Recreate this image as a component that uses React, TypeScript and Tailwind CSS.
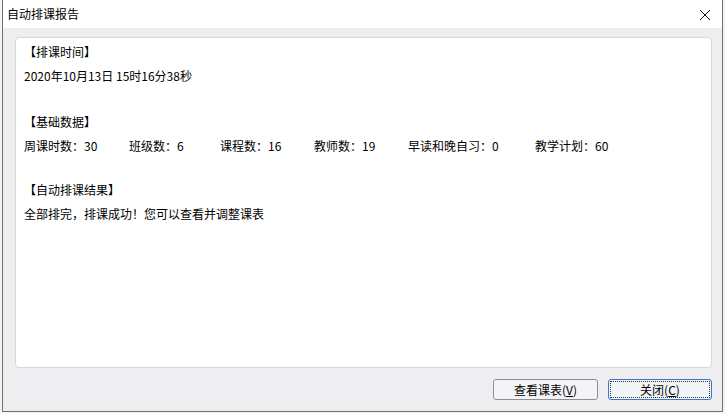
import React from 'react';

const FONT = { fontFamily: '"Microsoft YaHei", "Noto Sans CJK SC", sans-serif' };

const STATS = [
    { label: '周课时数', value: '30', w: 'w-[105px]' },
    { label: '班级数', value: '6', w: 'w-[91px]' },
    { label: '课程数', value: '16', w: 'w-[94px]' },
    { label: '教师数', value: '19', w: 'w-[94px]' },
    { label: '早读和晚自习', value: '0', w: 'w-[127px]' },
    { label: '教学计划', value: '60', w: 'w-auto' },
];

export default function App() {
    return (
        <div className="w-[725px] h-[413px] bg-[#f3f3f3] flex text-[12px] text-black" style={FONT}>
            <div className="ml-[2px] w-[721px] h-[412px] border-l border-r border-b border-[#707070] bg-[#eeedf0] flex flex-col">
                {/* Title bar */}
                <div className="h-[28px] bg-white flex items-center justify-between pl-[4px] pr-[11px] shrink-0">
                    <span className="text-[12px] leading-none">自动排课报告</span>
                    <svg width="12" height="12" viewBox="0 0 12 12" className="mt-[1px]">
                        <path d="M1 1L11 11M11 1L1 11" stroke="#111" strokeWidth="1" />
                    </svg>
                </div>

                {/* Report panel */}
                <div className="flex-1 flex flex-col pl-[12px] pr-[10px] pt-[9px] pb-[11px]">
                    <div className="flex-1 bg-white border border-[#d8d8d8] rounded-[4px] pl-[8px] pt-[2px] leading-[24px]">
                        <div>【排课时间】</div>
                        <div>2020年10月13日 15时16分38秒</div>

                        <div className="mt-[22px]">【基础数据】</div>
                        <div className="flex">
                            {STATS.map(s => (
                                <span key={s.label} className={s.w}>
                                    {s.label}：{s.value}
                                </span>
                            ))}
                        </div>

                        <div className="mt-[20px]">【自动排课结果】</div>
                        <div>全部排完，排课成功！您可以查看并调整课表</div>
                    </div>

                    {/* Buttons */}
                    <div className="flex justify-end gap-[10px] mt-[11px] pr-0">
                        <button className="w-[105px] h-[21px] rounded-[3px] border border-[#8a8f99] bg-[#f4f4f6] text-[12px] leading-none flex items-center justify-center">
                            查看课表(<span className="underline">V</span>)
                        </button>
                        <button className="w-[104px] h-[21px] rounded-[3px] border border-[#3c78c8] bg-[#f2f4f8] text-[12px] leading-none p-[1px]">
                            <span className="w-full h-full flex items-center justify-center border border-dotted border-[#333]">
                                关闭(<span className="underline">C</span>)
                            </span>
                        </button>
                    </div>
                </div>
            </div>
        </div>
    );
}
